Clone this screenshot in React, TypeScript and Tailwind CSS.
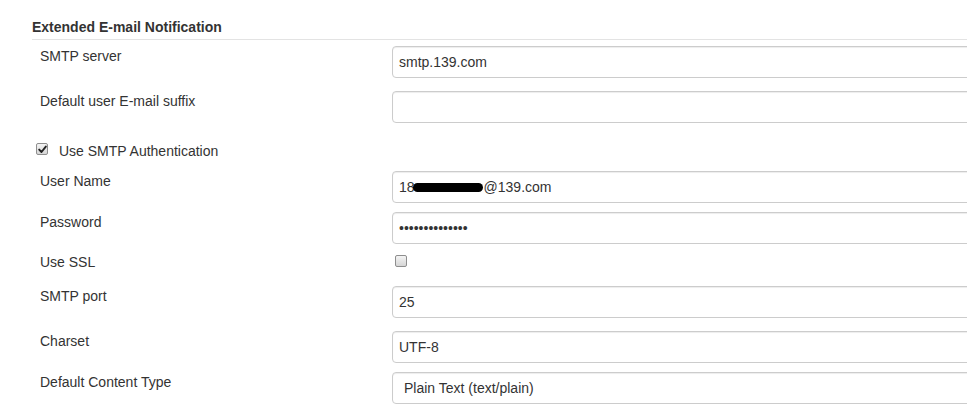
// Extended E-mail Notification settings block, read-only form rendering.
import type { ReactNode } from 'react';

function Box({ children, className = '' }: { children?: ReactNode; className?: string }) {
  return (
    <div
      className={`flex h-[32px] w-[640px] shrink-0 items-center rounded-[4px] border border-[#cccccc] bg-white pl-[6px] text-[14px] text-[#333] shadow-[inset_0_1px_1px_rgba(0,0,0,0.075)] ${className}`}
    >
      {children}
    </div>
  );
}

function Check({ checked, className = '' }: { checked?: boolean; className?: string }) {
  return (
    <span
      className={`flex size-[12px] shrink-0 items-center justify-center rounded-[2px] border border-[#8e8e8e] bg-linear-to-b from-[#f4f4f4] to-[#d6d6d6] ${className}`}
    >
      {checked ? (
        <svg width="9" height="9" viewBox="0 0 9 9" fill="none">
          <path d="M1.2 4.6 L3.5 7 L7.8 1.6" stroke="#222" strokeWidth="1.9" strokeLinecap="round" strokeLinejoin="round" />
        </svg>
      ) : null}
    </span>
  );
}

function Row({
  label,
  className = '',
  labelClass = 'pt-[2px]',
  children,
}: {
  label: string;
  className?: string;
  labelClass?: string;
  children: ReactNode;
}) {
  return (
    <div className={`flex ${className}`}>
      <div className={`w-[392px] shrink-0 pl-[40px] text-[14px] leading-[17px] text-[#333] ${labelClass}`}>{label}</div>
      {children}
    </div>
  );
}

export default function App() {
  return (
    <div className="h-[404px] w-[967px] overflow-hidden bg-white font-['Liberation_Sans',Arial,sans-serif] text-[#333]">
      <div className="ml-[32px] border-b border-[#e3e3e3] pt-[19px] pb-[4px]">
        <h2 className="text-[14px] leading-[16px] font-bold text-[#333]">Extended E-mail Notification</h2>
      </div>

      <Row label="SMTP server" className="mt-[6px]">
        <Box>smtp.139.com</Box>
      </Row>
      <Row label="Default user E-mail suffix" className="mt-[13px]">
        <Box />
      </Row>

      <div className="mt-[19px] flex h-[18px] items-start pl-[36px]">
        <Check checked className="mt-[1px]" />
        <span className="ml-[11px] text-[14px] leading-[18px]">Use SMTP Authentication</span>
      </div>

      <Row label="User Name" className="mt-[11px]">
        <Box>
          18
          <span className="mr-[1px] -ml-[2px] inline-block h-[9px] w-[70px] rounded-full bg-black" />
          @139.com
        </Box>
      </Row>
      <Row label="Password" className="mt-[9px]">
        <Box className="text-[11px]">••••••••••••••</Box>
      </Row>
      <Row label="Use SSL" className="mt-[10px] h-[18px]" labelClass="">
        <div className="flex h-[18px] items-start pl-[3px]">
          <Check className="mt-[1px]" />
        </div>
      </Row>
      <Row label="SMTP port" className="mt-[14px]">
        <Box>25</Box>
      </Row>
      <Row label="Charset" className="mt-[13px]">
        <Box>UTF-8</Box>
      </Row>
      <Row label="Default Content Type" className="mt-[9px]">
        <Box className="pl-[11px]">Plain Text (text/plain)</Box>
      </Row>
    </div>
  );
}
